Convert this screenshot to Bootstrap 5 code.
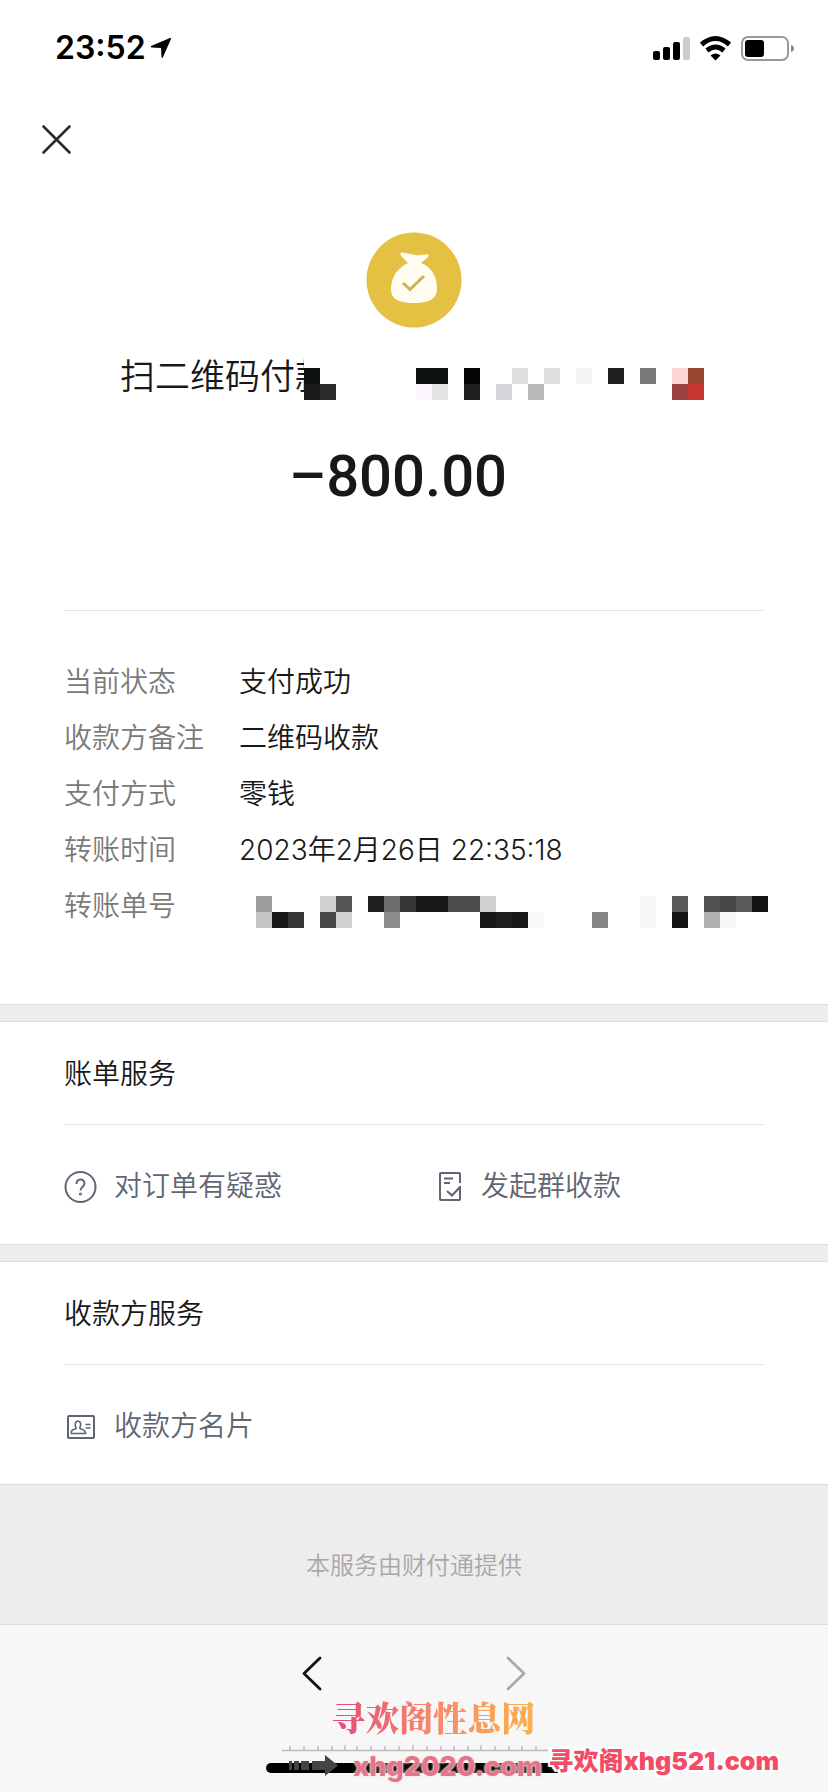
<!DOCTYPE html>
<html lang="zh-CN">
<head>
<meta charset="utf-8">
<meta name="viewport" content="width=device-width, initial-scale=1">
<title>账单详情</title>
<link href="https://cdn.jsdelivr.net/npm/bootstrap@5.3.0/dist/css/bootstrap.min.css" rel="stylesheet">
<style>
  body { font-family: Inter, "Noto Sans CJK SC", sans-serif; font-size: 28px; line-height: 40px; font-weight: 350; color: #181818; background: #f7f7f7; }
  svg { display: block; flex: none; }
  .status-bar { height: 96px; padding: 0 33px 0 55px; }
  .clock { font-size: 32px; font-weight: 600; color: #000; }
  .close-btn { margin: 24px 0 0 36px; width: 40px; height: 40px; }
  .receipt-head { padding-top: 72px; }
  .payee { font-size: 35px; line-height: 52px; margin-top: 22px; padding-right: 4px; }
  .payee-mask { margin-left: -26px; padding: 18px 0 2px; }
  .amount { font-family: Roboto, sans-serif; font-size: 58px; font-weight: 500; line-height: 72px; margin-top: 38px; padding-right: 32px; }
  .inset { margin: 0 64px; }
  .details { padding-top: 98px; }
  .rule { border-top: 1px solid #e3e3e3; }
  .facts { padding: 43px 0 70px; }
  .facts dt { flex: 0 0 175px; font-weight: inherit; color: #7a7a7a; }
  .facts dd { margin: 0; white-space: nowrap; }
  .fact-row { height: 56px; padding: 8px 0; }
  .facts .masked { margin: 10px 0 0 17px; width: 508px; }
  .band { height: 18px; background: #ededed; border: solid #dedede; border-width: 1px 0; }
  .section-title { font-size: 28px; line-height: 40px; font-weight: inherit; padding: 32px 0 30px; margin: 0; }
  .service-row { padding: 41px 0 38px; }
  .service-link { color: #5f6673; text-decoration: none; }
  .second-col { padding-left: 42px; }
  .provider { background: #ededed; border: solid #d9d9d9; border-width: 1px 0; padding: 63px 0 40px; font-size: 24px; line-height: 36px; color: #a8a8a8; }
  .toolbar { height: 164px; }
  .nav-keys { padding: 27px 0 0; gap: 164px; }
  .nav-keys .btn { width: 40px; height: 40px; }
  .home-pill { width: 296px; height: 10px; bottom: 16px; left: 50%; margin-left: -148px; background: #000; border-radius: 5px; }
  .mark-title { left: 40%; bottom: 52px; font-family: "Noto Serif CJK SC", "Noto Sans CJK SC", serif; font-size: 34px; font-weight: 900; background: linear-gradient(90deg, #e6477a, #f58a6c 50%, #fbb14c); -webkit-background-clip: text; background-clip: text; color: transparent; }
  .mark-ruler { left: 34%; bottom: 12px; }
  .mark-site { right: 286px; bottom: 4px; font-size: 27px; line-height: 36px; font-weight: 800; color: #e3758a; text-shadow: 0 0 2px #fbe3e0, 0 0 2px #fbe3e0, 0 0 3px #fbe3e0; }
  .mark-promo { right: 49px; bottom: 10px; font-size: 25px; line-height: 36px; font-weight: 900; color: #f24c66; text-shadow: 2px 0 #fff, -2px 0 #fff, 0 2px #fff, 0 -2px #fff, 2px 2px #fff, -2px -2px #fff, 2px -2px #fff, -2px 2px #fff, 0 0 4px #fff; }
</style>
</head>
<body>
<main class="bg-white">
  <header>
    <div class="status-bar d-flex align-items-center justify-content-between">
      <div class="d-flex align-items-center gap-1">
        <span class="clock">23:52</span>
        <svg width="22" height="22" viewBox="0 0 22 22"><path d="M1 9 20 1Q21.500 .5 21 2L13 20Q12 22 11.500 20L11 11 2 10.500Q0 10 1 9Z"/></svg>
      </div>
      <svg width="142" height="26" viewBox="653 36 142 26" aria-label="信号、无线网络、电池">
        <rect x="653" y="52" width="7" height="9" rx="2"/><rect x="663" y="48" width="7" height="13" rx="2"/><rect x="673" y="43" width="7" height="18" rx="2"/><rect x="683" y="38" width="7" height="23" rx="2" fill="#ccc"/>
        <g fill="none" stroke="#000" stroke-width="5"><path d="M701.500 45.500Q715.500 33.500 729.500 45.500"/><path d="M707 51.500Q715.500 44.500 724 51.500"/></g>
        <path d="M710.500 56.500Q715.500 52.500 720.500 56.500L715.500 61.500Z"/>
        <rect x="742" y="38" width="46" height="23" rx="6" fill="#fff" stroke="#999" stroke-width="2"/><rect x="745" y="41" width="19" height="17" rx="3"/><path d="M791 46Q794 47 794 49.500T791 53Z" fill="#888"/>
      </svg>
    </div>
    <button class="close-btn btn p-0 border-0 d-block" type="button" aria-label="关闭">
      <svg width="40" height="40" viewBox="0 0 40 40" fill="none" stroke="#2b2b2b" stroke-width="2.600" stroke-linecap="round"><path d="M7.500 6.500 33.500 32.500M33.500 6.500 7.500 32.500"/></svg>
    </button>
  </header>

  <section class="receipt-head d-flex flex-column align-items-center">
    <svg width="96" height="96" viewBox="0 0 96 96">
      <circle cx="48" cy="48" r="47.500" fill="#e4c143"/>
      <path d="M36 25C32 20 36 20 40 21C46 22 50 24 56 23C62 22 65 22 61 26L55 31C67 36 71 46 71 56C71 66 65 71 48 71C31 71 25 66 25 57C25 46 31 36 42 31Z" fill="#fffdf2"/>
      <path d="M37 51 44 57.500 58 44" fill="none" stroke="#cdb254" stroke-width="3"/>
    </svg>
    <div class="payee d-flex align-items-center">
      <span class="text-nowrap">扫二维码付款</span>
      <div class="payee-mask bg-white position-relative">
      <svg width="400" height="32" viewBox="0 0 25 2" shape-rendering="crispEdges" aria-hidden="true">
        <path fill="#0d1110" d="M0 0h1v1h-1zM7 0h2v1h-2z"/><path fill="#1c1a1c" d="M0 1h1v1h-1z"/><path fill="#2b2b2b" d="M1 1h1v1h-1z"/>
        <path fill="#e5e3e5" d="M8 1h1v1h-1z"/><path fill="#fcf8fd" d="M7 1h1v1h-1z"/><path fill="#050505" d="M10 0h1v1h-1z"/><path fill="#1f1f1f" d="M10 1h1v1h-1zM19 0h1v1h-1z"/>
        <path fill="#d6d4d8" d="M12 1h1v1h-1z"/><path fill="#dedede" d="M13 0h1v1h-1zM15 0h1v1h-1z"/><path fill="#bab8ba" d="M14 1h1v1h-1z"/><path fill="#f5f3f6" d="M17 0h1v1h-1z"/><path fill="#7a787a" d="M21 0h1v1h-1z"/>
        <path fill="#fdd5d3" d="M23 0h1v1h-1z"/><path fill="#9c4044" d="M23 1h1v1h-1z"/><path fill="#98472f" d="M24 0h1v1h-1z"/><path fill="#c73833" d="M24 1h1v1h-1z"/>
      </svg>
      </div>
    </div>
    <div class="amount">–800.00</div>
  </section>

  <section class="inset details">
    <dl class="facts rule mb-0">
      <div class="fact-row d-flex"><dt>当前状态</dt><dd>支付成功</dd></div>
      <div class="fact-row d-flex"><dt>收款方备注</dt><dd>二维码收款</dd></div>
      <div class="fact-row d-flex"><dt>支付方式</dt><dd>零钱</dd></div>
      <div class="fact-row d-flex"><dt>转账时间</dt><dd>2023年2月26日 22:35:18</dd></div>
      <div class="fact-row d-flex"><dt>转账单号</dt><dd class="masked">
        <svg width="512" height="32" viewBox="0 0 32 2" shape-rendering="crispEdges" aria-hidden="true">
          <path fill="#9c9c9c" d="M0 0h1v1h-1z"/><path fill="#c4c4c4" d="M0 1h1v1h-1z"/><path fill="#161817" d="M1 1h1v1h-1zM10 0h2v1h-2zM14 1h1v1h-1zM16 1h1v1h-1z"/><path fill="#363636" d="M2 1h1v1h-1zM9 0h1v1h-1z"/>
          <path fill="#d0d0d0" d="M4 0h1v1h-1zM5 1h1v1h-1zM14 0h1v1h-1z"/><path fill="#484848" d="M4 1h1v1h-1z"/><path fill="#555" d="M5 0h1v1h-1z"/><path fill="#1f1f1f" d="M7 0h1v1h-1zM15 1h1v1h-1z"/><path fill="#6e6e6e" d="M8 0h1v1h-1z"/><path fill="#8c8c8c" d="M8 1h1v1h-1z"/>
          <path fill="#4b4d4c" d="M12 0h2v1h-2z"/><path fill="#fcf9fd" d="M17 1h1v1h-1z"/><path fill="#868387" d="M21 1h1v1h-1z"/><path fill="#f7f7f7" d="M24 0h1v2h-1zM29 1h1v1h-1z"/>
          <path fill="#5a5a5a" d="M26 0h1v1h-1zM30 0h1v1h-1z"/><path fill="#111310" d="M26 1h1v1h-1zM31 0h1v1h-1z"/><path fill="#505050" d="M28 0h1v1h-1z"/><path fill="#b0b0b0" d="M28 1h1v1h-1z"/><path fill="#464646" d="M29 0h1v1h-1z"/>
        </svg></dd></div>
    </dl>
  </section>

  <div class="band"></div>
  <section class="inset">
    <h2 class="section-title">账单服务</h2>
    <div class="service-row rule row gx-0">
      <div class="col"><a href="#" class="service-link d-flex align-items-center">
        <svg class="me-3" width="34" height="34" viewBox="0 0 34 34" fill="none" stroke="#5f6673" stroke-width="2"><circle cx="16.500" cy="18" r="15"/><path d="M12.500 15C12.500 9 20.500 9 20.500 14.500C20.500 17.500 16.500 18 16.500 21.500"/><circle cx="16.500" cy="25" r=".6"/></svg>
        对订单有疑惑</a></div>
      <div class="col second-col"><a href="#" class="service-link d-flex align-items-center">
        <svg class="me-3" width="30" height="34" viewBox="-2 0 30 34" fill="none" stroke="#5f6673" stroke-width="2"><path d="M23 17V30.500Q23 31 22 31H4Q3 31 3 30V5Q3 4 4 4H22Q23 4 23 5V14M7 9.500H16M7 14H13M10 22 15 26.500 23 18"/></svg>
        发起群收款</a></div>
    </div>
  </section>

  <div class="band"></div>
  <section class="inset">
    <h2 class="section-title">收款方服务</h2>
    <div class="service-row rule">
      <a href="#" class="service-link d-flex align-items-center">
        <svg class="me-3" width="34" height="34" viewBox="0 0 34 34" fill="none" stroke="#5f6673" stroke-width="2"><rect x="4" y="7" width="26" height="22" rx="1"/><path stroke-width="1.700" d="M7.500 24.500Q6.500 21 11 20Q13 19.500 11.500 17.500C9.500 10.500 18 10.500 16.500 17Q15 19.500 17 20Q21.500 21 21.500 24.500ZM21.500 15.500H26.500M21.500 19H26.500"/></svg>
        收款方名片</a>
    </div>
  </section>
</main>

<div class="provider text-center">本服务由财付通提供</div>

<footer class="toolbar position-relative">
  <nav class="nav-keys d-flex justify-content-center">
    <button class="btn p-0 border-0" type="button" aria-label="后退"><svg width="40" height="44" viewBox="0 0 40 44" fill="none" stroke="#111" stroke-width="2.800" stroke-linecap="round" stroke-linejoin="round"><path d="M28 6 12 21.500 28 37"/></svg></button>
    <button class="btn p-0 border-0" type="button" aria-label="前进"><svg width="40" height="44" viewBox="0 0 40 44" fill="none" stroke="#aaa" stroke-width="2.800" stroke-linecap="round" stroke-linejoin="round"><path d="M12 6 28 21.500 12 37"/></svg></button>
  </nav>
  <div class="home-pill position-absolute"></div>
  <div class="mark-title position-absolute text-nowrap">寻欢阁性息网</div>
  <svg class="mark-ruler position-absolute" width="266" height="32" viewBox="281 1748 266 32">
    <path stroke="#bbb" stroke-width="1.500" d="M281 1753.500H547M289 1753v-4M303 1753v-4M317 1753v-4M331 1753v-4M344 1753v-5M356 1753v-4M370 1753v-4M384 1753v-4M398 1753v-4M412 1753v-5M426 1753v-4M440 1753v-4M453 1753v-4M467 1753v-4M480 1753v-5M494 1753v-4M508 1753v-4M521 1753v-4M535 1753v-4"/>
    <path fill="#444" d="M288 1764h3v9h-3zM293 1764h5v9h-5zM300 1764h8v9h-8zM311 1764h13v-6l13 10.500-13 10.500v-6h-13z"/>
  </svg>
  <div class="mark-site position-absolute">xhg2020.com</div>
  <div class="mark-promo position-absolute text-nowrap">寻欢阁xhg521.com</div>
</footer>
<script src="https://cdn.jsdelivr.net/npm/bootstrap@5.3.0/dist/js/bootstrap.bundle.min.js"></script>
</body>
</html>
